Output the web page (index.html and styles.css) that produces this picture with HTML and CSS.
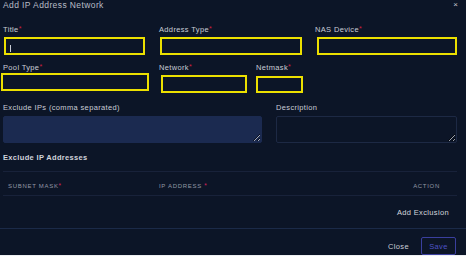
FILE: index.html
```html
<!DOCTYPE html>
<html lang="en">
<head>
  <meta charset="UTF-8" />
  <meta name="viewport" content="width=device-width, initial-scale=1.0"/>
  <title>Add IP Address Network</title>
  <link rel="stylesheet" href="styles.css">
</head>
<body>
  <div class="modal">
    <div class="modal-header">
      <h3>Add IP Address Network</h3>
      <span class="close-x">&times;</span>
    </div>

    <div class="modal-body">
      <div class="row-top">
        <div class="field">
          <label>Title<span class="req">*</span></label>
          <div class="input-wrap">
            <input type="text" class="hl in-title" />
            <span class="caret"></span>
          </div>
        </div>
        <div class="field">
          <label>Address Type<span class="req">*</span></label>
          <input type="text" class="hl in-type" />
        </div>
        <div class="field">
          <label>NAS Device<span class="req">*</span></label>
          <input type="text" class="hl in-nas" />
        </div>
      </div>

      <div class="row-mid">
        <div class="field f-pool">
          <label>Pool Type<span class="req">*</span></label>
          <input type="text" class="hl in-pool" />
        </div>
        <div class="field f-network">
          <label>Network<span class="req">*</span></label>
          <input type="text" class="hl in-network" />
        </div>
        <div class="field f-netmask">
          <label>Netmask<span class="req">*</span></label>
          <input type="text" class="hl in-netmask" />
        </div>
      </div>

      <div class="row-text">
        <div class="field">
          <label class="lbl-exclude">Exclude IPs (comma separated)</label>
          <textarea class="ta-exclude"></textarea>
        </div>
        <div class="field">
          <label class="lbl-desc">Description</label>
          <textarea class="ta-desc"></textarea>
        </div>
      </div>

      <h4 class="section-title">Exclude IP Addresses</h4>
      <table class="excl-table">
        <thead>
          <tr>
            <th class="col-mask">Subnet Mask<span class="req-dot">*</span></th>
            <th class="col-ip">IP Address <span class="req-dot">*</span></th>
            <th class="col-action">Action</th>
          </tr>
        </thead>
      </table>
      <div class="add-row">
        <a href="#">Add Exclusion</a>
      </div>
    </div>

    <div class="modal-footer">
      <button class="btn-close">Close</button>
      <button class="btn-save">Save</button>
    </div>
  </div>
</body>
</html>
```

FILE: styles.css
```css
* {
  box-sizing: border-box;
}

body {
  margin: 0;
  background-color: #eef0f3;
  font-family: 'Liberation Sans', Arial, sans-serif;
}

.modal {
  height: 255px;
  background-color: #0c1527;
  display: flex;
  flex-direction: column;
  color: #c8ccd6;
}

.modal-header {
  display: flex;
  justify-content: space-between;
  padding: 0 8px 0 3px;
  height: 11px;
}

.modal-header h3 {
  margin: 0;
  font-size: 8.5px;
  line-height: 11px;
  font-weight: normal;
  letter-spacing: 0.4px;
  color: #b9bdc7;
}

.close-x {
  font-size: 8px;
  line-height: 9px;
  color: #c3c7cf;
}

.modal-body {
  flex: 1;
  padding: 14px 9px 0 3px;
}

label {
  display: block;
  font-size: 7.5px;
  line-height: 10px;
  letter-spacing: 0.35px;
  color: #c8ccd6;
}

.req {
  color: #d11f3f;
  font-size: 7px;
  vertical-align: top;
  line-height: 8px;
  letter-spacing: 0;
}

input {
  display: block;
  background: transparent;
  outline: none;
  color: #c8ccd6;
}

.hl {
  border: 2px solid #ece000;
  height: 18px;
}

.row-top {
  display: grid;
  grid-template-columns: 142px 142px 142px;
  column-gap: 14px;
}

.row-top input {
  margin-top: 2px;
}

.input-wrap {
  position: relative;
}

.caret {
  position: absolute;
  left: 7px;
  top: 8px;
  width: 1px;
  height: 7px;
  background: #c8ccd6;
}

.in-title {
  width: 141px;
  margin-left: 1px;
}

.in-type {
  width: 142px;
  margin-left: 1px;
}

.in-nas {
  width: 140px;
  margin-left: 2px;
}

.row-mid {
  display: flex;
  margin-top: 8px;
}

.f-pool {
  margin-left: -2px;
  width: 148px;
}

.f-pool label {
  padding-left: 2px;
}

.in-pool {
  width: 148px;
}

.f-network {
  margin-left: 10px;
}

.in-network {
  width: 86px;
  margin: 2px 0 0 2px;
}

.f-netmask {
  margin-left: 9px;
}

.in-netmask {
  width: 47px;
  height: 17px;
  margin-top: 3px;
}

.row-text {
  display: grid;
  grid-template-columns: 259px 181px;
  column-gap: 14px;
  margin-top: 10px;
}

.row-text textarea {
  display: block;
  width: 100%;
  height: 27px;
  margin-top: 3px;
  resize: vertical;
  outline: none;
  border-radius: 2px;
}

.ta-exclude {
  background-color: #1b2a50;
  border: 1px solid #1b2a50;
}

.ta-desc {
  background-color: #0c1527;
  border: 1px solid #1d2944;
}

.section-title {
  margin: 10px 0 8px;
  font-size: 7.5px;
  line-height: 10px;
  letter-spacing: 0.33px;
  font-weight: bold;
  color: #d0d3db;
}

.excl-table {
  width: 454px;
  border-collapse: collapse;
}

.excl-table th {
  border-top: 1px solid #18223a;
  border-bottom: 1px solid #18223a;
  padding: 10px 0 5px 5px;
  font-size: 6px;
  line-height: 8px;
  font-weight: normal;
  text-transform: uppercase;
  letter-spacing: 0.7px;
  color: #9297a6;
  text-align: left;
}

.excl-table .col-mask {
  width: 151px;
}

.excl-table .col-action {
  text-align: right;
  padding-right: 17px;
}

.req-dot {
  color: #d8235a;
  font-size: 6.5px;
  vertical-align: top;
  line-height: 7px;
  letter-spacing: 0;
}

.add-row {
  height: 32px;
  display: flex;
  justify-content: flex-end;
  align-items: center;
  padding-right: 8px;
}

.add-row a {
  font-size: 7.5px;
  letter-spacing: 0.35px;
  color: #d3d6dd;
  text-decoration: none;
}

.modal-footer {
  border-top: 1px solid #1b2a48;
  padding: 8px 10px 0;
  display: flex;
  justify-content: flex-end;
  align-items: center;
  height: 27px;
}

button {
  font-family: 'Liberation Sans', Arial, sans-serif;
  font-size: 7.5px;
  letter-spacing: 0.35px;
  background: transparent;
  cursor: pointer;
}

.btn-close {
  border: none;
  padding: 0;
  margin-right: 12px;
  color: #c8ccd6;
}

.btn-save {
  width: 35px;
  height: 18px;
  padding: 0;
  border: 1px solid #3a3f9e;
  border-radius: 2px;
  color: #4d52c6;
}
```
